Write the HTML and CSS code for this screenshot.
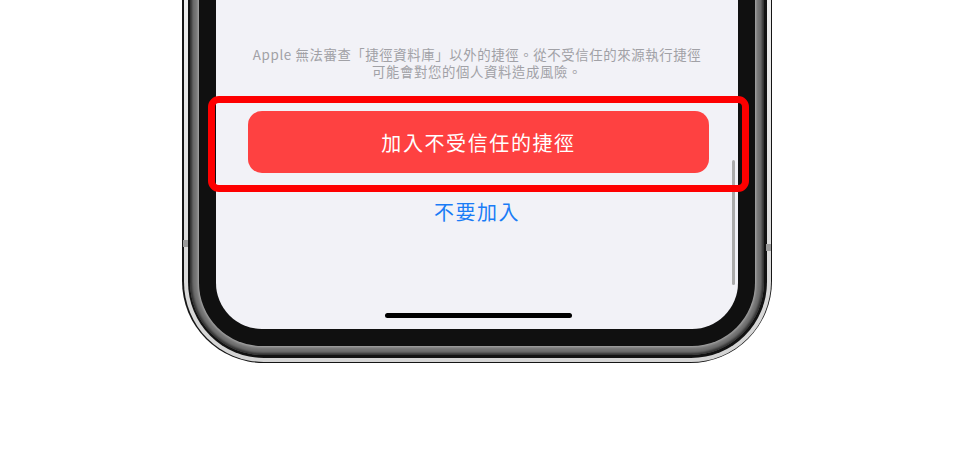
FILE: index.html
```html
<!DOCTYPE html>
<html lang="zh-Hant">
<head>
<meta charset="utf-8">
<title>加入不受信任的捷徑</title>
<link rel="stylesheet" href="styles.css">
</head>
<body>
<div class="phone">
  <div class="silver">
    <div class="rim">
      <div class="steel">
        <div class="bezel">
          <div class="screen">
            <p class="note"><span class="note-line">Apple 無法審查「捷徑資料庫」以外的捷徑。從不受信任的來源執行捷徑</span><span class="note-line">可能會對您的個人資料造成風險。</span></p>
            <div class="btn-danger">加入不受信任的捷徑</div>
            <div class="btn-cancel">不要加入</div>
            <div class="home"></div>
            <div class="scrollbar"></div>
          </div>
        </div>
      </div>
    </div>
  </div>
</div>
<div class="antenna antenna-left"></div>
<div class="antenna antenna-right"></div>
<div class="highlight"></div>
</body>
</html>
```

FILE: styles.css
```css
html, body {
  margin: 0;
  padding: 0;
  background: #ffffff;
}
body {
  position: relative;
  width: 954px;
  height: 457px;
  overflow: hidden;
  font-family: "Noto Sans CJK TC", "Noto Sans", sans-serif;
}
.phone {
  margin-top: -80px;
  margin-left: 182px;
  width: 590px;
  height: 443px;
  box-sizing: border-box;
  padding: 1.5px;
  background: #151515;
  border-radius: 0 0 82px 82px;
}
.silver {
  height: 100%;
  box-sizing: border-box;
  padding: 4px;
  background: linear-gradient(#f2f2f2, #d4d4d4);
  border-radius: 0 0 80px 80px;
}
.rim {
  height: 100%;
  box-sizing: border-box;
  padding: 2.5px;
  background: #121212;
  border-radius: 0 0 76px 76px;
}
.steel {
  height: 100%;
  box-sizing: border-box;
  padding: 9px;
  background: #737373;
  box-shadow: inset 0 0 3px 2px #2a2a2a;
  border-radius: 0 0 73px 73px;
}
.bezel {
  height: 100%;
  box-sizing: border-box;
  padding: 17px;
  background: #101010;
  box-shadow: 0 0 3px 1px #b0b0b0;
  border-radius: 0 0 63px 63px;
}
.screen {
  position: relative;
  height: 100%;
  box-sizing: border-box;
  display: flex;
  flex-direction: column;
  align-items: center;
  padding-top: 92px;
  background: #f2f2f7;
  border-radius: 0 0 46px 46px;
  overflow: hidden;
}
.note {
  margin: 0;
  font-size: 13.4px;
  color: #a1a1a6;
  text-align: center;
  letter-spacing: 0.6px;
  white-space: nowrap;
}
.note-line {
  display: block;
  height: 17px;
  line-height: 17px;
}
.btn-danger {
  margin-top: 31px;
  width: 461px;
  height: 62px;
  margin-left: 3px;
  display: flex;
  align-items: center;
  justify-content: center;
  background: #fe4141;
  border-radius: 14px;
  color: #ffffff;
  font-size: 20px;
  letter-spacing: 1.6px;
}
.btn-cancel {
  margin-top: 27px;
  line-height: 24px;
  font-size: 20px;
  letter-spacing: 1.5px;
  color: #1a7cf6;
}
.home {
  margin-top: auto;
  margin-bottom: 11px;
  width: 187px;
  height: 5px;
  margin-left: 2px;
  border-radius: 3px;
  background: #000000;
}
.scrollbar {
  position: absolute;
  right: 3px;
  top: 206px;
  width: 3px;
  height: 125px;
  border-radius: 2px;
  background: #ababab;
}
.antenna {
  position: absolute;
  width: 5px;
  height: 7px;
  background: #9a9a9a;
}
.antenna-left {
  left: 183px;
  top: 240px;
}
.antenna-right {
  left: 766px;
  top: 244px;
}
.highlight {
  position: absolute;
  left: 208px;
  top: 96px;
  width: 541px;
  height: 96px;
  box-sizing: border-box;
  border: 7px solid #fe0000;
  border-radius: 11px;
}
```
